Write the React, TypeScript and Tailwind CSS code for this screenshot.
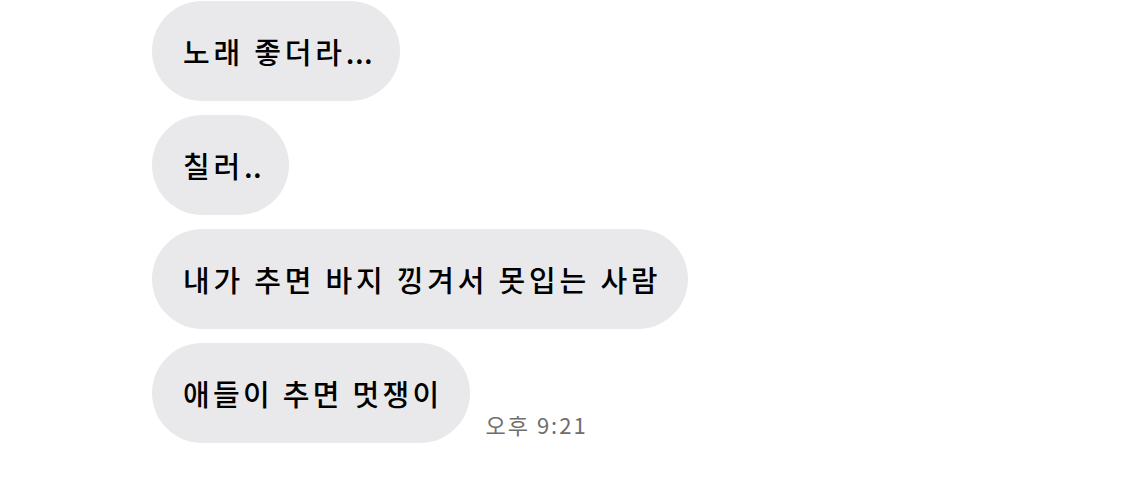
import React from "react";

const font = { fontFamily: '"Noto Sans CJK KR", "Noto Sans", sans-serif' };

function Bubble({ text, dots, tracking = "tracking-[3.8px]" }: { text: string; dots?: string; tracking?: string }) {
  return (
    <div className="h-[100px] rounded-full bg-[#e9e9eb] pl-[31px] pr-[27px] flex items-center">
      <span className={`text-[29px] font-medium ${tracking} text-black leading-none whitespace-nowrap`} style={font}>
        {text}
        {dots && <span className="tracking-[0.5px]">{dots}</span>}
      </span>
    </div>
  );
}

export default function App() {
  return (
    <div className="w-[1125px] h-[483px] bg-white pl-[152px] pt-[1px] flex flex-col items-start gap-[14px]">
      <Bubble text="노래 좋더라" dots="..." />
      <Bubble text="칠러" dots=".." />
      <Bubble text="내가 추면 바지 낑겨서 못입는 사람" />
      <div className="flex items-end gap-[16px]">
        <Bubble text="애들이 추면 멋쟁이" tracking="tracking-[3.3px]" />
        <span className="text-[22px] text-[#6e6e6e] tracking-[2px] mb-[2px] whitespace-nowrap" style={font}>
          오후 9:21
        </span>
      </div>
    </div>
  );
}
